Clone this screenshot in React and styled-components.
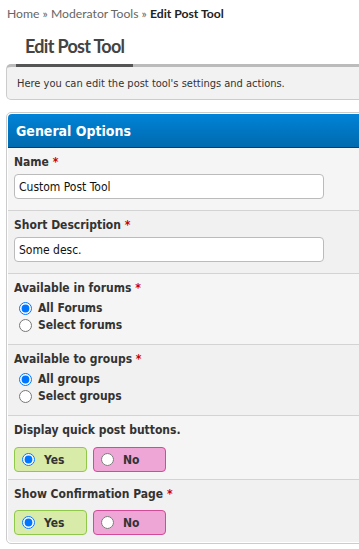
import React from "react";
import styled, { createGlobalStyle } from "styled-components";

const GlobalStyle = createGlobalStyle`
  html, body {
    margin: 0;
    padding: 0;
    background: #fff;
    overflow: hidden;
  }
  body {
    font-family: "DejaVu Sans Condensed", "Liberation Sans", sans-serif;
  }
`;

const Page = styled.div`
  width: 400px;
  padding: 0 0 0 6px;
`;

const Breadcrumb = styled.div`
  font-family: Lato, "Open Sans", sans-serif;
  font-size: 12.2px;
  line-height: 16px;
  color: #666;
  padding: 6px 0 0 1px;
  b {
    color: #222;
  }
`;

const TabRow = styled.div`
  display: flex;
  padding-left: 10px;
  margin-top: 8px;
`;

const Tab = styled.div`
  font-family: Lato, "Open Sans", sans-serif;
  font-size: 18px;
  font-weight: 700;
  color: #444;
  letter-spacing: -0.7px;
  line-height: 22px;
  padding: 5px 9px 7px 9px;
  border-bottom: 3px solid #555;
  margin-bottom: -3px;
  position: relative;
  z-index: 1;
`;

const Description = styled.div`
  background: #f2f2f2;
  border: 1px solid #ccc;
  border-top: 3px solid #bbb;
  border-radius: 5px 0 0 5px;
  padding: 10px 10px 9px;
  font-size: 11px;
  line-height: 13px;
  color: #333;
`;

const Wrapper = styled.div`
  margin-top: 12px;
  border: 1px solid #ccc;
  border-radius: 5px 0 0 5px;
  padding: 1px;
  background: #fff;
`;

const Header = styled.div`
  height: 33px;
  display: flex;
  align-items: center;
  padding-left: 8px;
  background: linear-gradient(#0083d8, #006aae);
  border-bottom: 1px solid #123a52;
  border-radius: 4px 0 0 0;
  color: #fff;
  font-size: 14px;
  font-weight: 700;
`;

const Row = styled.div`
  background: ${(p) => (p.alt ? "#f1f1f1" : "#f5f5f5")};
  border-bottom: ${(p) => (p.last ? "none" : "1px solid #d3d3d3")};
  padding: 7px 6px ${(p) => p.bottom || 11}px;
  border-radius: ${(p) => (p.last ? "0 0 0 4px" : "0")};
`;

const Label = styled.div`
  font-size: 12px;
  font-weight: 700;
  line-height: 14px;
  color: #333;
  margin-bottom: ${(p) => p.gap}px;
  em {
    font-style: normal;
    color: #c00;
  }
`;

const TextInput = styled.input`
  box-sizing: border-box;
  width: 310px;
  height: 25px;
  border: 1px solid #bbb;
  border-radius: 4px;
  padding: 0 4px;
  font-family: inherit;
  font-size: 12px;
  color: #111;
  background: #fff;
  outline: none;
`;

const RadioList = styled.div`
  display: flex;
  flex-direction: column;
`;

const RadioLine = styled.label`
  display: flex;
  align-items: center;
  height: 17px;
  font-size: 12px;
  font-weight: 700;
  color: #333;
  input {
    margin: 2px 6px 0 5px;
  }
`;

const YesNo = styled.div`
  display: flex;
  gap: 6px;
`;

const Choice = styled.label`
  box-sizing: border-box;
  width: 73px;
  height: 25px;
  display: flex;
  align-items: center;
  border: 1px solid ${(p) => (p.yes ? "#90c94a" : "#d24a98")};
  background: ${(p) => (p.yes ? "#d8eba9" : "#eea6d6")};
  border-radius: 4px;
  font-size: 12px;
  font-weight: 700;
  color: #333;
  input {
    margin: 0 9px 0 7px;
  }
`;

function Req() {
  return <em>*</em>;
}

function App() {
  return (
    <>
      <GlobalStyle />
      <Page>
        <Breadcrumb>
          Home » Moderator Tools » <b>Edit Post Tool</b>
        </Breadcrumb>
        <TabRow>
          <Tab>Edit Post Tool</Tab>
        </TabRow>
        <Description>Here you can edit the post tool's settings and actions.</Description>
        <Wrapper>
          <Header>General Options</Header>
          <Row>
            <Label gap={5}>
              Name <Req />
            </Label>
            <TextInput defaultValue="Custom Post Tool" />
          </Row>
          <Row alt>
            <Label gap={5}>
              Short Description <Req />
            </Label>
            <TextInput defaultValue="Some desc." />
          </Row>
          <Row>
            <Label gap={4}>
              Available in forums <Req />
            </Label>
            <RadioList>
              <RadioLine>
                <input type="radio" name="forums" defaultChecked />
                All Forums
              </RadioLine>
              <RadioLine>
                <input type="radio" name="forums" />
                Select forums
              </RadioLine>
            </RadioList>
          </Row>
          <Row alt>
            <Label gap={4}>
              Available to groups <Req />
            </Label>
            <RadioList>
              <RadioLine>
                <input type="radio" name="groups" defaultChecked />
                All groups
              </RadioLine>
              <RadioLine>
                <input type="radio" name="groups" />
                Select groups
              </RadioLine>
            </RadioList>
          </Row>
          <Row bottom={7}>
            <Label gap={10}>Display quick post buttons.</Label>
            <YesNo>
              <Choice yes>
                <input type="radio" name="quick" defaultChecked />
                Yes
              </Choice>
              <Choice>
                <input type="radio" name="quick" />
                No
              </Choice>
            </YesNo>
          </Row>
          <Row alt last bottom={7}>
            <Label gap={9}>
              Show Confirmation Page <Req />
            </Label>
            <YesNo>
              <Choice yes>
                <input type="radio" name="confirm" defaultChecked />
                Yes
              </Choice>
              <Choice>
                <input type="radio" name="confirm" />
                No
              </Choice>
            </YesNo>
          </Row>
        </Wrapper>
      </Page>
    </>
  );
}

export default App;
